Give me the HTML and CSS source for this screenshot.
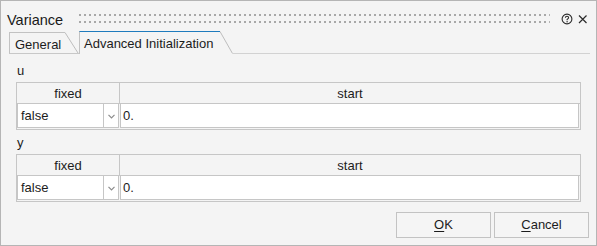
FILE: index.html
```html
<!DOCTYPE html>
<html>
<head>
<meta charset="utf-8">
<link rel="stylesheet" href="styles.css">
</head>
<body>
<div class="window">
  <div class="titlebar">
    <span class="title">Variance</span>
    <svg class="grip" height="9" aria-hidden="true">
      <defs>
        <pattern id="dots" width="5" height="7" patternUnits="userSpaceOnUse">
          <rect width="2" height="2" fill="#a8a8a8"/>
        </pattern>
      </defs>
      <rect width="100%" height="100%" fill="url(#dots)"/>
    </svg>
    <svg class="help" width="12" height="12" viewBox="0 0 12 12" aria-hidden="true">
      <circle cx="6" cy="6" r="4.9" fill="none" stroke="#2b2b2b" stroke-width="1.1"/>
      <path d="M4.4 4.8 C4.4 3.8 5.1 3.3 6 3.3 C6.9 3.3 7.6 3.9 7.6 4.7 C7.6 5.6 6.6 5.8 6.1 6.5 L6.1 7.2" fill="none" stroke="#2b2b2b" stroke-width="1.1"/>
      <circle cx="6.1" cy="8.7" r="0.7" fill="#2b2b2b"/>
    </svg>
    <svg class="close" width="10" height="10" viewBox="0 0 10 10" aria-hidden="true">
      <path d="M1 1.5 L8.5 9 M8.5 1.5 L1 9" stroke="#2b2b2b" stroke-width="1.2" fill="none"/>
    </svg>
  </div>

  <div class="tabs">
    <div class="tab">
      <div class="tab-body tab-general">General</div>
      <svg class="slant" width="14" height="22" viewBox="0 0 14 22" aria-hidden="true">
        <line x1="0" y1="0.5" x2="13" y2="21" stroke="#bdbdbd" stroke-width="1"/>
        <line x1="0" y1="21.5" x2="14" y2="21.5" stroke="#c8c8c8" stroke-width="1"/>
      </svg>
    </div>
    <div class="tab active">
      <div class="tab-body tab-adv">Advanced Initialization</div>
      <svg class="slant" width="13" height="23" viewBox="0 0 13 23" aria-hidden="true">
        <line x1="0" y1="0.5" x2="12.5" y2="22.5" stroke="#bdbdbd" stroke-width="1"/>
      </svg>
    </div>
    <div class="tab-rest"></div>
  </div>

  <div class="content">
    <div class="section">
      <div class="label">u</div>
      <div class="grid">
        <div class="grid-head">
          <div class="head-cell head-fixed">fixed</div>
          <div class="head-cell head-start">start</div>
        </div>
        <div class="grid-row">
          <div class="combo">
            <span class="combo-text">false</span>
            <span class="combo-arrow">
              <svg width="7" height="5" viewBox="0 0 7 5" aria-hidden="true"><polyline points="0.5,0.8 3.5,3.8 6.5,0.8" fill="none" stroke="#8c8c8c" stroke-width="1.2"/></svg>
            </span>
          </div>
          <div class="field">0.</div>
        </div>
      </div>
    </div>
    <div class="section second">
      <div class="label">y</div>
      <div class="grid">
        <div class="grid-head">
          <div class="head-cell head-fixed">fixed</div>
          <div class="head-cell head-start">start</div>
        </div>
        <div class="grid-row">
          <div class="combo">
            <span class="combo-text">false</span>
            <span class="combo-arrow">
              <svg width="7" height="5" viewBox="0 0 7 5" aria-hidden="true"><polyline points="0.5,0.8 3.5,3.8 6.5,0.8" fill="none" stroke="#8c8c8c" stroke-width="1.2"/></svg>
            </span>
          </div>
          <div class="field">0.</div>
        </div>
      </div>
    </div>
  </div>

  <div class="footer">
    <button class="btn" type="button"><u>O</u>K</button>
    <button class="btn" type="button"><u>C</u>ancel</button>
  </div>
</div>
</body>
</html>
```

FILE: styles.css
```css
* {
  box-sizing: border-box;
}

html,
body {
  margin: 0;
  padding: 0;
}

body {
  font-family: "Liberation Sans", Arial, sans-serif;
  font-size: 13px;
  color: #1c1c1c;
  background: #f4f4f4;
}

.window {
  width: 597px;
  height: 246px;
  border: 1px solid #b5b5b5;
  background: #f4f4f4;
  display: flex;
  flex-direction: column;
}

/* title bar */
.titlebar {
  height: 30px;
  display: flex;
  align-items: flex-start;
  padding-left: 6px;
  padding-right: 8px;
}

.title {
  font-size: 14.5px;
  line-height: 16px;
  margin-top: 11px;
  color: #1a1a1a;
}

.grip {
  flex: 1;
  margin-top: 13px;
  margin-left: 16px;
  margin-right: 11px;
}

.help {
  margin-top: 12px;
}

.close {
  margin-top: 13px;
  margin-left: 5px;
}

/* tabs */
.tabs {
  height: 23px;
  display: flex;
  align-items: flex-end;
  padding-left: 8px;
}

.tab {
  display: flex;
  align-items: flex-start;
}

.slant {
  display: block;
}

.tab-body {
  line-height: 15px;
  white-space: nowrap;
}

.tab-general {
  width: 56px;
  height: 22px;
  border-left: 1px solid #c2c2c2;
  border-top: 1px solid #c2c2c2;
  border-bottom: 1px solid #c8c8c8;
  padding: 4px 0 1px 5px;
}

.tab-adv {
  width: 141px;
  height: 23px;
  border-left: 1px solid #c2c2c2;
  border-top: 1px solid #1f7bbd;
  padding: 4px 0 3px 4px;
}

.tab-rest {
  flex: 1;
  height: 1px;
  border-bottom: 1px solid #d2d2d2;
  margin-right: 6px;
}

/* content */
.content {
  padding: 9px 15px 0 15px;
}

.section.second {
  margin-top: 5px;
}

.label {
  line-height: 15px;
  margin-bottom: 4px;
  padding-left: 1px;
}

.grid {
  border: 1px solid #c6c6c6;
}

.grid-head {
  display: flex;
  height: 21px;
  border-bottom: 1px solid #c6c6c6;
}

.head-cell {
  padding-top: 1px;
  line-height: 19px;
  text-align: center;
}

.head-fixed {
  width: 103px;
  border-right: 1px solid #c6c6c6;
}

.head-start {
  flex: 1;
}

.grid-row {
  display: flex;
  gap: 1px;
  padding: 0 1px 1px 0;
}

.combo {
  width: 102px;
  height: 24px;
  display: flex;
  background: #ffffff;
  border: 1px solid #c6c6c6;
  border-top: none;
}

.combo-text {
  flex: 1;
  padding: 1px 0 0 3px;
  line-height: 22px;
}

.combo-arrow {
  width: 15px;
  border-left: 1px solid #c6c6c6;
  display: flex;
  align-items: center;
  justify-content: center;
  padding-top: 1px;
}

.combo-arrow svg {
  display: block;
}

.field {
  flex: 1;
  height: 24px;
  background: #ffffff;
  border: 1px solid #c6c6c6;
  border-top: none;
  padding: 1px 0 0 2px;
  line-height: 22px;
}

/* footer */
.footer {
  margin-top: auto;
  display: flex;
  justify-content: flex-end;
  gap: 3px;
  padding: 0 7px 7px 0;
}

.btn {
  width: 95px;
  height: 26px;
  margin: 0;
  padding: 0;
  font-family: "Liberation Sans", Arial, sans-serif;
  font-size: 13px;
  color: #1c1c1c;
  background: #f5f5f5;
  border: 1px solid #c3c3c3;
  border-radius: 0;
  line-height: 24px;
}

.btn u {
  text-decoration: underline;
  text-underline-offset: 2px;
}
```
